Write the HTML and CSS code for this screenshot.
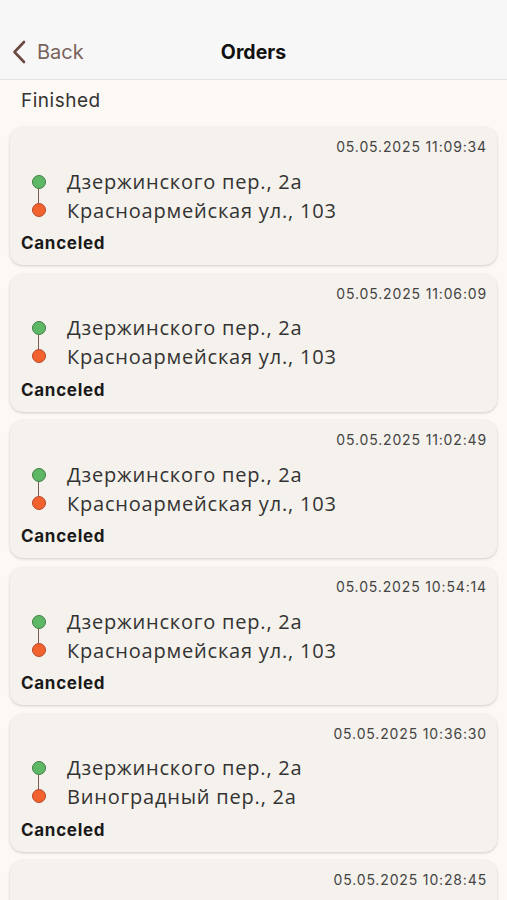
FILE: index.html
```html
<!DOCTYPE html>
<html>
<head>
	<meta charset="utf-8">
	<title>Orders</title>
	<link rel="stylesheet" href="styles.css">
</head>
<body>
	<div class="header">
		<div class="nav">
			<a class="back" href="#">
				<svg class="chev" width="14" height="24" viewBox="0 0 14 24"><path d="M12 2 L2.5 12 L12 22" fill="none" stroke="#6b4a42" stroke-width="2.6" stroke-linecap="round" stroke-linejoin="round"/></svg>
				<span>Back</span>
			</a>
			<div class="title">Orders</div>
		</div>
	</div>

	<div class="content">
		<div class="section">Finished</div>

		<ul class="orders">
			<li class="card">
				<div class="time">05.05.2025 11:09:34</div>
				<div class="route">
					<div class="pins"><i class="dot from"></i><i class="line"></i><i class="dot to"></i></div>
					<div class="addr">
						<p>Дзержинского пер., 2а</p>
						<p>Красноармейская ул., 103</p>
					</div>
				</div>
				<div class="status">Canceled</div>
			</li>
			<li class="card">
				<div class="time">05.05.2025 11:06:09</div>
				<div class="route">
					<div class="pins"><i class="dot from"></i><i class="line"></i><i class="dot to"></i></div>
					<div class="addr">
						<p>Дзержинского пер., 2а</p>
						<p>Красноармейская ул., 103</p>
					</div>
				</div>
				<div class="status">Canceled</div>
			</li>
			<li class="card">
				<div class="time">05.05.2025 11:02:49</div>
				<div class="route">
					<div class="pins"><i class="dot from"></i><i class="line"></i><i class="dot to"></i></div>
					<div class="addr">
						<p>Дзержинского пер., 2а</p>
						<p>Красноармейская ул., 103</p>
					</div>
				</div>
				<div class="status">Canceled</div>
			</li>
			<li class="card">
				<div class="time">05.05.2025 10:54:14</div>
				<div class="route">
					<div class="pins"><i class="dot from"></i><i class="line"></i><i class="dot to"></i></div>
					<div class="addr">
						<p>Дзержинского пер., 2а</p>
						<p>Красноармейская ул., 103</p>
					</div>
				</div>
				<div class="status">Canceled</div>
			</li>
			<li class="card">
				<div class="time">05.05.2025 10:36:30</div>
				<div class="route">
					<div class="pins"><i class="dot from"></i><i class="line"></i><i class="dot to"></i></div>
					<div class="addr">
						<p>Дзержинского пер., 2а</p>
						<p>Виноградный пер., 2а</p>
					</div>
				</div>
				<div class="status">Canceled</div>
			</li>
			<li class="card">
				<div class="time">05.05.2025 10:28:45</div>
				<div class="route">
					<div class="pins"><i class="dot from"></i><i class="line"></i><i class="dot to"></i></div>
					<div class="addr">
						<p>Дзержинского пер., 2а</p>
						<p>Красноармейская ул., 103</p>
					</div>
				</div>
				<div class="status">Canceled</div>
			</li>
		</ul>
	</div>
</body>
</html>
```
FILE: styles.css
```css
* {margin: 0; padding: 0;}
html, body {height: 100%; overflow: hidden;}
body {background: #fcf8f4; font-family: "Inter", "Liberation Sans", sans-serif; color: #222;}

.header {background: #f7f7f7; border-bottom: 1px solid #e4e2e0; padding: 30px 0 5px;}
.nav {position: relative; height: 44px; display: flex; align-items: center; justify-content: center;}
.back {position: absolute; left: 12px; top: 10px; display: flex; align-items: center; gap: 11px; text-decoration: none; color: #7a625d; font-size: 20px;}
.chev {display: block;}
.title {font-size: 19.5px; font-weight: 700; color: #111;}

.content {padding: 0 10px;}
.section {padding: 10px 0 0 11px; font-size: 19px; line-height: 22px; color: #333; letter-spacing: 0.5px;}

.orders {list-style: none; display: flex; flex-direction: column; gap: 8.7px; margin-top: 15px;}
.card {background: #f5f1ec; border-radius: 13px; padding: 12px 10px 12px 11px; box-shadow: 0 1px 3px rgba(0, 0, 0, 0.18);}
.time {text-align: right; font-size: 14px; line-height: 16px; color: #444; letter-spacing: 0.85px;}

.route {display: flex; gap: 11px; margin-top: 11.5px;}
.pins {width: 35px; display: flex; flex-direction: column; align-items: center; justify-content: center;}
.dot {display: block; width: 12px; height: 12px; border-radius: 50%;}
.dot.from {background: #5db764; border: 1px solid #3f7e44;}
.dot.to {background: #f2622f; border: 1px solid #b8472a;}
.line {display: block; width: 1.5px; height: 14px; background: #7b5b52;}
.addr p {font-family: "Open Sans", "Liberation Sans", sans-serif; font-size: 20px; line-height: 29px; color: #333; letter-spacing: 0.8px; white-space: nowrap;}

.status {margin-top: 8.5px; font-size: 17px; line-height: 20px; font-weight: 700; color: #1a1a1a; letter-spacing: 0.7px;}
```
